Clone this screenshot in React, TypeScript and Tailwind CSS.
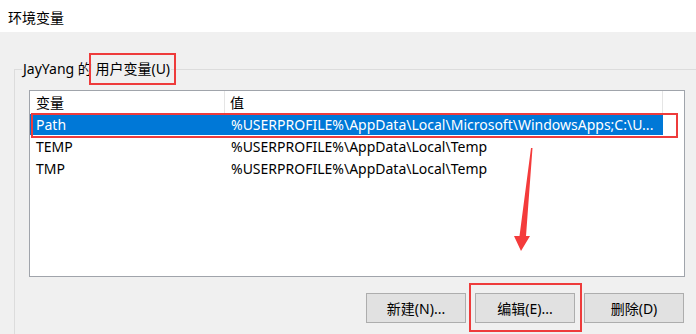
import React from 'react';

const rows = [
  { name: 'Path', value: '%USERPROFILE%\\AppData\\Local\\Microsoft\\WindowsApps;C:\\U...', selected: true },
  { name: 'TEMP', value: '%USERPROFILE%\\AppData\\Local\\Temp', selected: false },
  { name: 'TMP', value: '%USERPROFILE%\\AppData\\Local\\Temp', selected: false },
];

const buttons = ['新建(N)...', '编辑(E)...', '删除(D)'];

export default function App() {
  return (
    <div
      className="relative w-[696px] h-[334px] overflow-hidden bg-[#f0f0f0] text-[14px] text-black"
      style={{ fontFamily: '"Noto Sans", "Noto Sans CJK SC", sans-serif' }}
    >
      {/* Title bar */}
      <div className="h-[32px] bg-white flex items-center pl-[8px] pt-[2px]">环境变量</div>

      {/* Group box */}
      <div className="relative ml-[14px] mt-[37px] w-[720px] h-[300px] border-t border-l border-[#dcdcdc]">
        <div className="absolute left-[7px] -top-[11px] bg-[#f0f0f0] px-[1px] leading-[20px]">
          JayYang 的 用户变量(U)
        </div>

        {/* List view */}
        <div className="ml-[14px] mt-[20px] w-[656px] h-[187px] border border-[#a0a4ab] bg-white">
          <div className="flex h-[22px] items-center">
            <div className="w-[195px] h-full border-r border-[#e5e5e5] pl-[6px] flex items-center">变量</div>
            <div className="w-[438px] h-full border-r border-[#e5e5e5] pl-[5px] flex items-center">值</div>
          </div>
          {rows.map((row) => (
            <div key={row.name} className="flex h-[22px] items-center">
              <div className={`w-[633px] h-[21px] flex items-center ${row.selected ? 'bg-[#0078d7] text-white' : ''}`}>
                <div className="w-[196px] pl-[6px] whitespace-nowrap">{row.name}</div>
                <div className="pl-[5px] whitespace-nowrap">{row.value}</div>
              </div>
            </div>
          ))}
        </div>

        {/* Buttons */}
        <div className="flex gap-[9px] ml-[351px] mt-[16px]">
          {buttons.map((label) => (
            <button
              key={label}
              className="w-[100px] h-[30px] bg-[#e1e1e1] border border-[#adadad] flex items-center justify-center"
            >
              {label}
            </button>
          ))}
        </div>
      </div>

      {/* Annotations */}
      <div className="absolute left-[89px] top-[53px] w-[87px] h-[32px] border-2 border-[#ee3b3b]" />
      <div className="absolute left-[31px] top-[113px] w-[647px] h-[25px] border-2 border-[#ee3b3b]" />
      <div className="absolute left-[469px] top-[283px] w-[113px] h-[49px] border-2 border-[#ee3b3b]" />
      <svg className="absolute left-0 top-0" width="696" height="334">
        <polygon
          points="531,148 532.5,148 526,236 530,236 521,251 514,236 519.5,236"
          fill="#f43b3b"
        />
      </svg>
    </div>
  );
}
